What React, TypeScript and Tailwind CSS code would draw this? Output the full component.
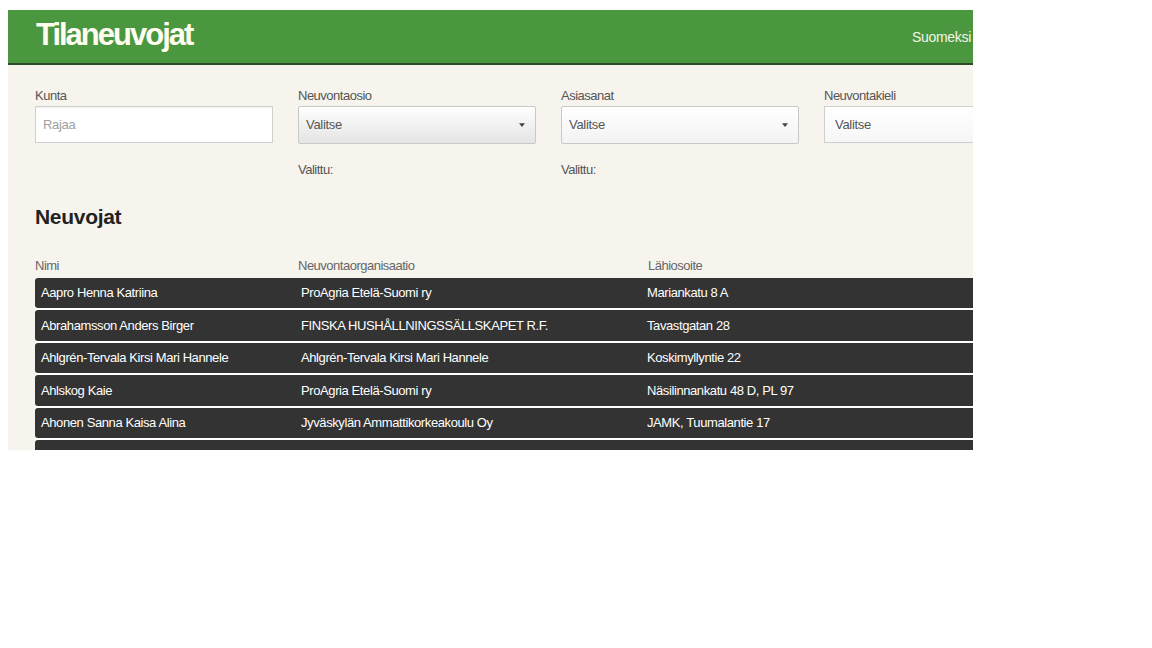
const advisors = [
  { name: 'Aapro Henna Katriina', org: 'ProAgria Etelä-Suomi ry', address: 'Mariankatu 8 A' },
  { name: 'Abrahamsson Anders Birger', org: 'FINSKA HUSHÅLLNINGSSÄLLSKAPET R.F.', address: 'Tavastgatan 28' },
  { name: 'Ahlgrén-Tervala Kirsi Mari Hannele', org: 'Ahlgrén-Tervala Kirsi Mari Hannele', address: 'Koskimyllyntie 22' },
  { name: 'Ahlskog Kaie', org: 'ProAgria Etelä-Suomi ry', address: 'Näsilinnankatu 48 D, PL 97' },
  { name: 'Ahonen Sanna Kaisa Alina', org: 'Jyväskylän Ammattikorkeakoulu Oy', address: 'JAMK, Tuumalantie 17' },
  { name: 'Ahonen Tuomas', org: 'ProAgria Keski-Suomi ry', address: 'Sepänkatu 4' },
];

function Caret() {
  return (
    <svg viewBox="0 0 8 5" className="w-[6px] h-[4px]">
      <path d="M0 0h8L4 5z" fill="#444" />
    </svg>
  );
}

function Select({ light }: { light?: boolean }) {
  return (
    <div
      className={`h-[38px] flex items-center justify-between pl-[7px] pr-[10px] border border-[#c8c8c8] rounded-[2px] ${
        light ? 'bg-gradient-to-b from-white to-[#f3f3f3]' : 'bg-gradient-to-b from-white to-[#e4e4e4]'
      }`}
    >
      <span className="text-[13px] tracking-[-0.3px] text-[#555]">Valitse</span>
      <Caret />
    </div>
  );
}

export default function App() {
  return (
    <div className="w-full h-[648px] bg-white pt-[10px] pl-[8px]" style={{ fontFamily: '"Liberation Sans", Arial, sans-serif' }}>
      <div className="w-[965px] h-[440px] overflow-hidden bg-[#f7f4ee]">
        <header className="h-[55px] bg-[#4b973f] border-b-2 border-[#2e4b29] flex items-start justify-between pl-[28px]">
          <h1 className="text-[31px] font-bold tracking-[-2px] text-[#fffdf0] leading-none pt-[9px]">Tilaneuvojat</h1>
          <span className="text-[14px] tracking-[-0.3px] text-[#f0f6e8] pt-[17px] mr-[2px]">Suomeksi</span>
        </header>

        <div className="pl-[27px]">
          <div className="grid grid-cols-[238px_238px_238px_238px] gap-x-[25px] pt-[23px]">
            <div>
              <label className="block text-[13px] tracking-[-0.5px] text-[#555] leading-[15px] mb-[3px]">Kunta</label>
              <div className="h-[37px] bg-white border border-[#cfcfcf] shadow-[inset_0_1px_1px_rgba(0,0,0,0.06)] flex items-center pl-[7px]">
                <span className="text-[13px] tracking-[-0.3px] text-[#a0a0a0]">Rajaa</span>
              </div>
            </div>
            <div>
              <label className="block text-[13px] tracking-[-0.5px] text-[#555] leading-[15px] mb-[3px]">Neuvontaosio</label>
              <Select />
              <p className="text-[13px] tracking-[-0.5px] text-[#555] mt-[16px]">Valittu:</p>
            </div>
            <div>
              <label className="block text-[13px] tracking-[-0.5px] text-[#555] leading-[15px] mb-[3px]">Asiasanat</label>
              <Select light />
              <p className="text-[13px] tracking-[-0.5px] text-[#555] mt-[16px]">Valittu:</p>
            </div>
            <div className="w-[260px]">
              <label className="block text-[13px] tracking-[-0.5px] text-[#555] leading-[15px] mb-[3px]">Neuvontakieli</label>
              <div className="h-[37px] bg-gradient-to-b from-white to-[#f6f6f6] border border-[#cfcfcf] flex items-center pl-[10px]">
                <span className="text-[13px] tracking-[-0.3px] text-[#555]">Valitse</span>
              </div>
            </div>
          </div>

          <h2 className="text-[21px] font-bold tracking-[-0.3px] text-[#222] mt-[25px] leading-[24px]">Neuvojat</h2>

          <div className="grid grid-cols-[263px_350px_1fr] text-[13px] tracking-[-0.5px] text-[#666] mt-[29px] leading-[15px]">
            <span>Nimi</span>
            <span>Neuvontaorganisaatio</span>
            <span>Lähiosoite</span>
          </div>

          <div className="mt-[5px] flex flex-col gap-[2px] bg-white">
            {advisors.map((a) => (
              <div
                key={a.name}
                className="h-[30.6px] bg-[#333] rounded-l-[3px] grid grid-cols-[263px_347px_1fr] items-center text-[13px] tracking-[-0.4px] text-white"
              >
                <span className="pl-[6px] whitespace-nowrap">{a.name}</span>
                <span className="pl-[3px] whitespace-nowrap">{a.org}</span>
                <span className="pl-[2px] whitespace-nowrap">{a.address}</span>
              </div>
            ))}
          </div>
        </div>
      </div>
    </div>
  );
}
